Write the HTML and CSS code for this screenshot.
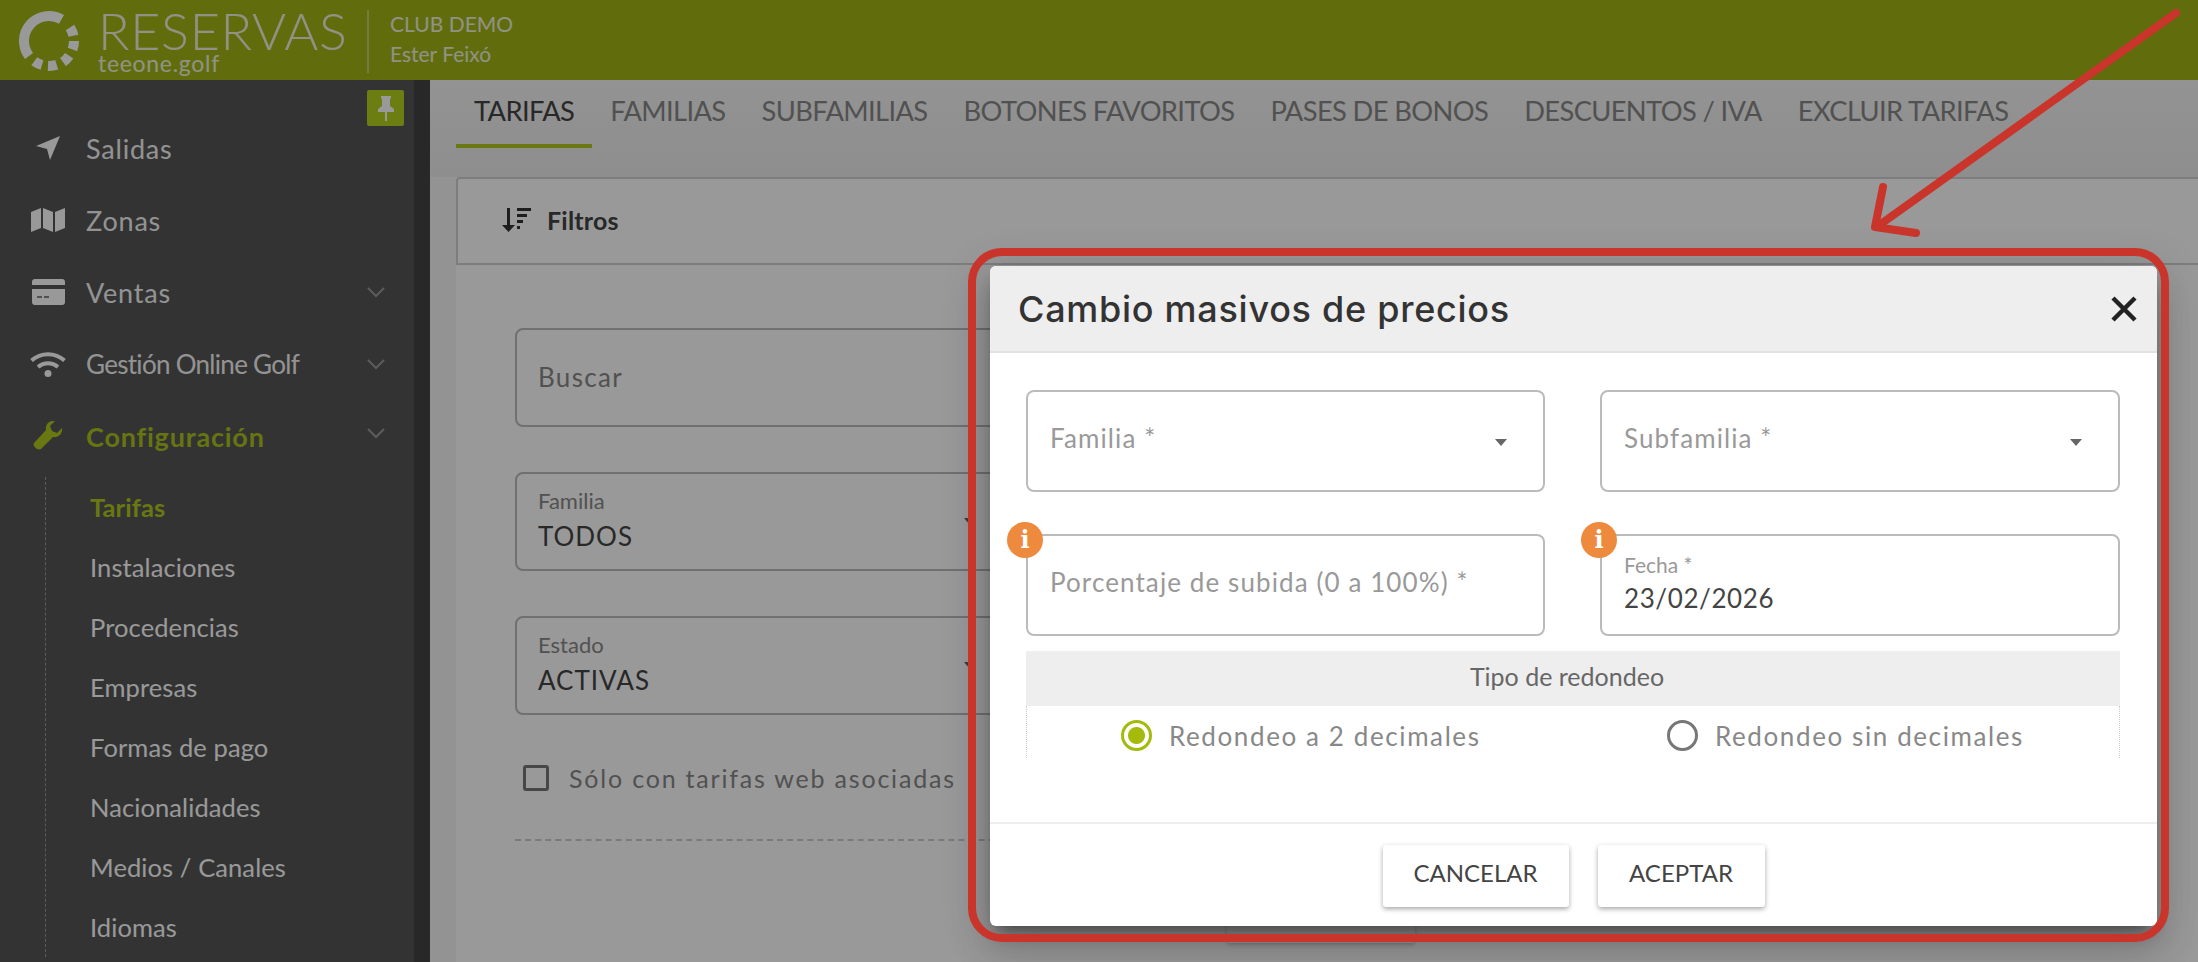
FILE: index.html
```html
<!DOCTYPE html>
<html lang="es">
<head>
<meta charset="utf-8">
<title>Reservas</title>
<link rel="stylesheet" href="styles.css">
</head>
<body>
<div class="app">
  <header class="topbar">
    <svg class="logo" width="60" height="62" viewBox="0 0 60 62">
      <g fill="none" stroke="#fff" stroke-width="10">
        <path d="M10 46A25 25 0 0 1 42.500 9.350"/>
        <path d="M51 17.500A25 25 0 0 1 54.450 25.800"/>
        <path d="M55 31A25 25 0 0 1 53.500 39.500"/>
        <path d="M50.200 45.700A25 25 0 0 1 44 52"/>
        <path d="M37.700 54.800A25 25 0 0 1 29 56"/>
        <path d="M23 55A25 25 0 0 1 15.300 51.200"/>
      </g>
    </svg>
    <div class="brand">
      <div class="brand-name">RESERVAS</div>
      <div class="brand-sub">teeone.golf</div>
    </div>
    <div class="club">
      <div class="club-name">CLUB DEMO</div>
      <div class="club-user">Ester Feixó</div>
    </div>
  </header>
  <div class="layout">
    <aside class="sidebar">
      <div class="pin">
        <svg width="20" height="28" viewBox="0 0 20 28"><path d="M5 2h10v2l-1 1v7l4 3v3H2v-3l4-3V5L5 4z M9 18h2v9H9z" fill="#fff"/></svg>
      </div>
      <nav class="nav">
        <a class="nav-item">
          <span class="nav-icon"><svg width="26" height="26" viewBox="0 0 26 26"><path d="M25 1L15 25l-3-11L1 11z" fill="#fff"/></svg></span>
          <span class="nav-label">Salidas</span>
        </a>
        <a class="nav-item">
          <span class="nav-icon"><svg width="34" height="26" viewBox="0 0 34 26"><path d="M0 5l10-4v20L0 25z M12 1l10 4v20l-10-4z M24 5l10-4v20l-10 4z" fill="#fff"/></svg></span>
          <span class="nav-label">Zonas</span>
        </a>
        <a class="nav-item">
          <span class="nav-icon"><svg width="33" height="26" viewBox="0 0 33 26"><path d="M3 0h27a3 3 0 0 1 3 3v3H0V3a3 3 0 0 1 3-3z M0 10h33v13a3 3 0 0 1-3 3H3a3 3 0 0 1-3-3z" fill="#fff"/><path d="M5 18h5M12 18h5" stroke="#888" stroke-width="2"/></svg></span>
          <span class="nav-label">Ventas</span>
          <svg class="chev" width="20" height="12" viewBox="0 0 20 12"><path d="M2 2l8 8 8-8" fill="none" stroke="#999" stroke-width="2"/></svg>
        </a>
        <a class="nav-item">
          <span class="nav-icon"><svg width="36" height="26" viewBox="0 0 36 26"><g fill="none" stroke="#fff" stroke-width="4"><path d="M1.500 9.500C11 1 25 1 34.500 9.500"/><path d="M8 16c6-5 14-5 20 0"/></g><circle cx="18" cy="22.500" r="3.500" fill="#fff"/></svg></span>
          <span class="nav-label nav-label-tight">Gestión Online Golf</span>
          <svg class="chev" width="20" height="12" viewBox="0 0 20 12"><path d="M2 2l8 8 8-8" fill="none" stroke="#999" stroke-width="2"/></svg>
        </a>
        <a class="nav-item nav-active">
          <span class="nav-icon"><svg width="30" height="30" viewBox="0 0 30 30"><path d="M29 7l-5 5-5-2-2-5 5-5c-5-1-10 3-9 9L1 22c-2 3 4 8 7 6l12-12c6 1 10-4 9-9z" fill="#b0c81c"/></svg></span>
          <span class="nav-label">Configuración</span>
          <svg class="chev" width="20" height="12" viewBox="0 0 20 12"><path d="M2 2l8 8 8-8" fill="none" stroke="#999" stroke-width="2"/></svg>
        </a>
      </nav>
      <ul class="sub">
        <li class="sub-active">Tarifas</li>
        <li>Instalaciones</li>
        <li>Procedencias</li>
        <li>Empresas</li>
        <li>Formas de pago</li>
        <li>Nacionalidades</li>
        <li>Medios / Canales</li>
        <li>Idiomas</li>
      </ul>
    </aside>
    <main class="main">
      <div class="tabs">
        <a class="tab tab-active">TARIFAS</a>
        <a class="tab">FAMILIAS</a>
        <a class="tab">SUBFAMILIAS</a>
        <a class="tab">BOTONES FAVORITOS</a>
        <a class="tab">PASES DE BONOS</a>
        <a class="tab">DESCUENTOS / IVA</a>
        <a class="tab">EXCLUIR TARIFAS</a>
      </div>
      <section class="card">
        <div class="card-head">
          <svg width="30" height="24" viewBox="0 0 30 24"><g fill="#333"><path d="M5 0h3v17h5l-6.500 7L0 17h5z"/><path d="M15 0h14v3H15z M15 6h10v3H15z M15 12h6v3h-6z M15 18h3v3h-3z"/></g></svg>
          <span>Filtros</span>
        </div>
        <div class="card-body">
          <div class="bg-field"><span class="bg-placeholder">Buscar</span></div>
          <div class="bg-field">
            <span class="bg-small">Familia</span><span class="bg-value">TODOS</span>
            <span class="bg-caret"></span>
          </div>
          <div class="bg-field">
            <span class="bg-small">Estado</span><span class="bg-value">ACTIVAS</span>
            <span class="bg-caret"></span>
          </div>
          <label class="bg-check"><span class="bg-box"></span><span>Sólo con tarifas web asociadas</span></label>
          <div class="bg-dash"></div>
          <div class="bg-button"></div>
        </div>
      </section>
    </main>
  </div>
</div>

<div class="backdrop"></div>

<div class="dialog">
  <div class="dialog-head">
    <h2>Cambio masivos de precios</h2>
    <svg width="28" height="28" viewBox="0 0 28 28"><path d="M3 3l22 22M25 3L3 25" stroke="#222" stroke-width="4.500" fill="none"/></svg>
  </div>
  <div class="dialog-body">
    <div class="form-grid">
      <div class="field">
        <span class="placeholder">Familia *</span>
        <span class="caret"></span>
      </div>
      <div class="field">
        <span class="placeholder">Subfamilia *</span>
        <span class="caret"></span>
      </div>
      <div class="field">
        <span class="badge">i</span>
        <span class="placeholder">Porcentaje de subida (0 a 100%) *</span>
      </div>
      <div class="field field-filled">
        <span class="badge">i</span>
        <span class="small">Fecha *</span>
        <span class="value">23/02/2026</span>
      </div>
    </div>
    <div class="band">Tipo de redondeo</div>
    <div class="radios">
      <label class="radio radio-on"><span class="dot"></span><span class="radio-text">Redondeo a 2 decimales</span></label>
      <label class="radio"><span class="dot"></span><span class="radio-text">Redondeo sin decimales</span></label>
    </div>
  </div>
  <div class="dialog-foot">
    <button class="btn btn-cancel">CANCELAR</button>
    <button class="btn btn-ok">ACEPTAR</button>
  </div>
</div>

<div class="annot-box"></div>
<svg class="annot-arrow" width="2198" height="962" viewBox="0 0 2198 962">
  <g fill="none" stroke="#c9352b" stroke-width="8" stroke-linecap="round" stroke-linejoin="round">
    <path d="M2176 13L1878 226"/>
    <path d="M1883 187L1875 227L1916 233"/>
  </g>
</svg>
</body>
</html>
```
FILE: styles.css
```css
* { box-sizing: border-box; }
html, body { margin: 0; padding: 0; }
body {
  width: 2198px;
  height: 962px;
  overflow: hidden;
  position: relative;
  font-family: "Lato", "Liberation Sans", sans-serif;
  background: #fff;
}
.app { display: flex; flex-direction: column; height: 962px; }

/* top bar */
.topbar {
  height: 80px;
  flex: none;
  background: #a2b617;
  display: flex;
  align-items: flex-start;
  padding: 10px 0 0 19px;
  color: #fff;
}
.logo { flex: none; margin-right: 19px; }
.brand { width: 271px; height: 63px; border-right: 2px solid rgba(255,255,255,.35); flex: none; }
.brand-name { font-size: 52px; font-weight: 300; line-height: 38px; margin-top: 1px; letter-spacing: .7px; opacity: .85; }
.brand-sub { font-size: 23px; font-weight: 400; line-height: 22px; margin-top: 3px; letter-spacing: .7px; opacity: .85; }
.club { margin-left: 21px; font-size: 21px; opacity: .85; margin-top: -1px; }
.club-name { line-height: 30px; }
.club-user { line-height: 30px; }

/* sidebar */
.layout { flex: 1; display: flex; min-height: 0; }
.sidebar {
  width: 430px;
  flex: none;
  background: #555;
  border-right: 16px solid #434343;
  position: relative;
  padding-top: 32px;
  overflow: hidden;
}
.pin {
  position: absolute;
  left: 367px;
  top: 10px;
  width: 37px;
  height: 36px;
  background: #b5d01e;
  border-radius: 2px;
  display: flex;
  align-items: center;
  justify-content: center;
}
.nav-item {
  height: 72px;
  display: flex;
  align-items: center;
  color: #fff;
  font-size: 27px;
  padding-left: 26px;
  position: relative;
}
.nav-icon { width: 60px; flex: none; display: flex; justify-content: center; padding-right: 16px; }
.nav-label { opacity: .95; letter-spacing: .8px; }
.nav-label-tight { font-size: 26px; letter-spacing: -.7px; }
.chev { position: absolute; left: 366px; top: 30px; }
.nav-active { color: #b0c81c; font-weight: 700; }
.nav-active .chev { top: 27px; }
.sub {
  list-style: none;
  margin: 17px 0 0 45px;
  padding: 0 0 0 44px;
  border-left: 1px dashed #999;
  color: #fff;
  font-size: 25.500px;
  letter-spacing: .1px;
}
.sub li { height: 60px; line-height: 60px; }
.sub li:first-child { margin-top: -12px; }
.sub-active { color: #b0c81c; font-weight: 700; }

/* main */
.main {
  flex: 1;
  min-width: 0;
  background: linear-gradient(#f5f5f5 0, #ededed 97px, #f5f5f5 97px);
  display: flex;
  flex-direction: column;
  overflow: hidden;
}
.tabs { height: 68px; flex: none; margin-left: 26px; display: flex; align-items: stretch; }
.tab {
  padding: 0 18px 4px;
  display: flex;
  align-items: center;
  font-size: 27.300px;
  letter-spacing: -.62px;
  color: #888;
  border-bottom: 4px solid transparent;
}
.tab-active { color: #444; border-bottom-color: #b0c81c; }
.card {
  flex: 1;
  margin: 29px 0 0 26px;
  background: #fff;
  overflow: hidden;
}
.card-head {
  height: 88px;
  border: 2px solid #d0d0d0;
  border-right: none;
  border-radius: 4px 0 0 0;
  display: flex;
  align-items: center;
  gap: 15px;
  padding: 0 0 2px 44px;
  font-size: 25px;
  font-weight: 700;
  color: #444;
  letter-spacing: .2px;
}
.card-body { padding: 63px 0 0 59px; display: flex; flex-direction: column; gap: 45px; }
.bg-field {
  width: 501px;
  height: 99px;
  flex: none;
  border: 2px solid #bbb;
  border-radius: 8px;
  padding: 0 21px;
  display: flex;
  flex-direction: column;
  justify-content: center;
  position: relative;
  font-size: 24px;
}
.bg-placeholder { color: #888; font-size: 26px; letter-spacing: 1.300px; margin-top: -2px; }
.bg-small { font-size: 22px; color: #888; line-height: 24px; margin: -2px 0 6px; }
.bg-value { font-size: 26px; color: #444; line-height: 34px; letter-spacing: 1px; }
.bg-caret {
  position: absolute;
  right: 38px;
  top: 44px;
  border: 6px solid transparent;
  border-top: 7px solid #666;
  border-bottom: 0;
}
.bg-check { display: flex; align-items: center; gap: 20px; font-size: 25px; color: #888; letter-spacing: 1.800px; margin: 3px 0 1px 8px; height: 30px; white-space: nowrap; }
.bg-box { width: 26px; height: 26px; border: 3px solid #777; border-radius: 3px; flex: none; }
.bg-dash { border-top: 2px dashed #ccc; width: 520px; flex: none; }
.bg-button { width: 188px; height: 60px; flex: none; margin: -3px 0 0 712px; background: #fff; border-radius: 3px; box-shadow: 0 2px 4px rgba(0,0,0,.2); }

/* overlay */
.backdrop { position: absolute; inset: 0; background: rgba(0,0,0,.4); }

/* dialog */
.dialog {
  position: absolute;
  left: 990px;
  top: 266px;
  width: 1167px;
  height: 660px;
  background: #fff;
  border-radius: 6px;
  box-shadow: 0 11px 15px -7px rgba(0,0,0,.45), 0 24px 38px 3px rgba(0,0,0,.14), 0 9px 46px 8px rgba(0,0,0,.12);
  display: flex;
  flex-direction: column;
}
.dialog-head {
  height: 87px;
  flex: none;
  background: #eee;
  border-bottom: 2px solid #e2e2e2;
  border-radius: 6px 6px 0 0;
  display: flex;
  align-items: center;
  justify-content: space-between;
  padding: 0 19px 0 28px;
}
.dialog-head h2 { margin: 0; font-size: 36px; font-weight: 500; font-family: "Inter", sans-serif; color: #333; letter-spacing: .73px; }
.dialog-body { flex: 1; padding: 37px 37px 0 36px; }
.form-grid { display: grid; grid-template-columns: 519px 520px; column-gap: 55px; row-gap: 42px; }
.field {
  height: 102px;
  border: 2px solid #bbb;
  border-radius: 8px;
  padding: 0 22px;
  position: relative;
  display: flex;
  flex-direction: column;
  justify-content: center;
}
.placeholder { font-size: 26px; color: #999; letter-spacing: 1.100px; margin-top: -6px; }
.caret {
  position: absolute;
  right: 36px;
  top: 47px;
  border: 6px solid transparent;
  border-top: 7px solid #666;
  border-bottom: 0;
}
.small { font-size: 21px; color: #999; line-height: 24px; margin: -2px 0 3px; }
.value { font-size: 26px; color: #444; line-height: 36px; letter-spacing: .6px; }
.badge {
  position: absolute;
  left: -21px;
  top: -14px;
  width: 36px;
  height: 36px;
  border-radius: 50%;
  background: #ee8a3e;
  color: #fff;
  font-family: "DejaVu Serif", serif;
  font-weight: 700;
  font-size: 24px;
  line-height: 36px;
  text-align: center;
}
.band {
  margin-top: 15px;
  height: 55px;
  background: #eee;
  text-align: center;
  line-height: 51px;
  padding-right: 12px;
  font-size: 25px;
  color: #666;
}
.radios {
  height: 52px;
  border-left: 1px dotted #ccc;
  border-right: 1px dotted #ccc;
  display: grid;
  grid-template-columns: 546px 1fr;
  align-items: start;
}
.radio { display: flex; align-items: center; gap: 17px; padding: 13px 0 0 94px; height: 46px; font-size: 26px; color: #888; white-space: nowrap; letter-spacing: 1.600px; }
.dot { width: 31px; height: 31px; border-radius: 50%; border: 3px solid #777; flex: none; }
.radio-on .dot { border-color: #a4bb0c; background: radial-gradient(circle, #a4bb0c 0 8px, #fff 9px); }
.dialog-foot {
  height: 104px;
  flex: none;
  border-top: 2px solid #eee;
  display: flex;
  justify-content: center;
  gap: 29px;
  padding-top: 21px;
}
.btn {
  height: 62px;
  background: #fff;
  border: none;
  border-radius: 3px;
  box-shadow: 0 2px 5px rgba(0,0,0,.35);
  font-family: "Lato", sans-serif;
  font-size: 24px;
  color: #444;
  padding: 0 0 7px;
}
.btn-cancel { width: 186px; }
.btn-ok { width: 167px; }

/* annotation */
.annot-box {
  position: absolute;
  left: 968px;
  top: 248px;
  width: 1201px;
  height: 694px;
  border: 8px solid #c9352b;
  border-radius: 34px;
}
.annot-arrow { position: absolute; left: 0; top: 0; }
```
